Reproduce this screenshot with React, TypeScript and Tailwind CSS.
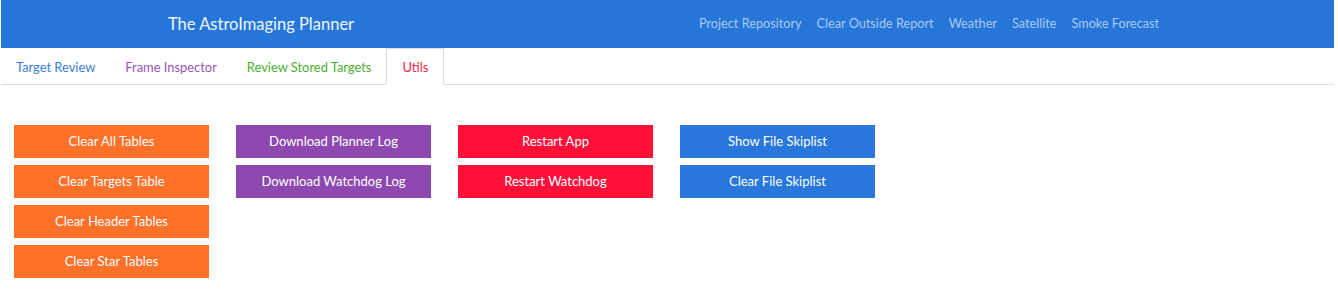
import React from "react";

const font = { fontFamily: '"Lato", "Open Sans", sans-serif' };

const cols: { color: string; items: string[] }[] = [
  { color: "bg-[#ff7029]", items: ["Clear All Tables", "Clear Targets Table", "Clear Header Tables", "Clear Star Tables"] },
  { color: "bg-[#8d49af]", items: ["Download Planner Log", "Download Watchdog Log"] },
  { color: "bg-[#fe1039]", items: ["Restart App", "Restart Watchdog"] },
  { color: "bg-[#2777dc]", items: ["Show File Skiplist", "Clear File Skiplist"] },
];

export default function App() {
  return (
    <div className="w-[1338px] h-[306px] bg-white pl-[1px] pr-[4px]" style={font}>
      <div className="h-[48px] bg-[#2676d9] flex items-center">
        <div className="w-[698px] pl-[167px] text-[16.5px] text-[#eef6ff]">The AstroImaging Planner</div>
        <div className="flex gap-[15px] text-[12.7px] text-[#a8c9f2]">
          <span>Project Repository</span>
          <span>Clear Outside Report</span>
          <span>Weather</span>
          <span>Satellite</span>
          <span>Smoke Forecast</span>
        </div>
      </div>
      <div className="h-[37px] flex items-end border-b border-[#dddddd] text-[12.9px]">
        <div className="h-[36px] pt-[3px] px-[15px] flex items-center text-[#3b7fd1]">Target Review</div>
        <div className="h-[36px] pt-[3px] px-[15px] flex items-center text-[#9a55bb]">Frame Inspector</div>
        <div className="h-[36px] pt-[3px] px-[15px] flex items-center text-[#4cae32]">Review Stored Targets</div>
        <div className="h-[37px] pt-[3px] -mb-px px-[15px] flex items-center text-[#f0244a] bg-white border border-[#dddddd] border-b-white">Utils</div>
      </div>
      <div className="flex gap-[27px] pt-[40px] pl-[13px]">
        {cols.map((c, i) => (
          <div key={i} className="flex flex-col gap-[7px] w-[195px]">
            {c.items.map((t) => (
              <div key={t} className={`h-[33px] ${c.color} flex items-center justify-center text-[13px] text-white`}>
                {t}
              </div>
            ))}
          </div>
        ))}
      </div>
    </div>
  );
}
